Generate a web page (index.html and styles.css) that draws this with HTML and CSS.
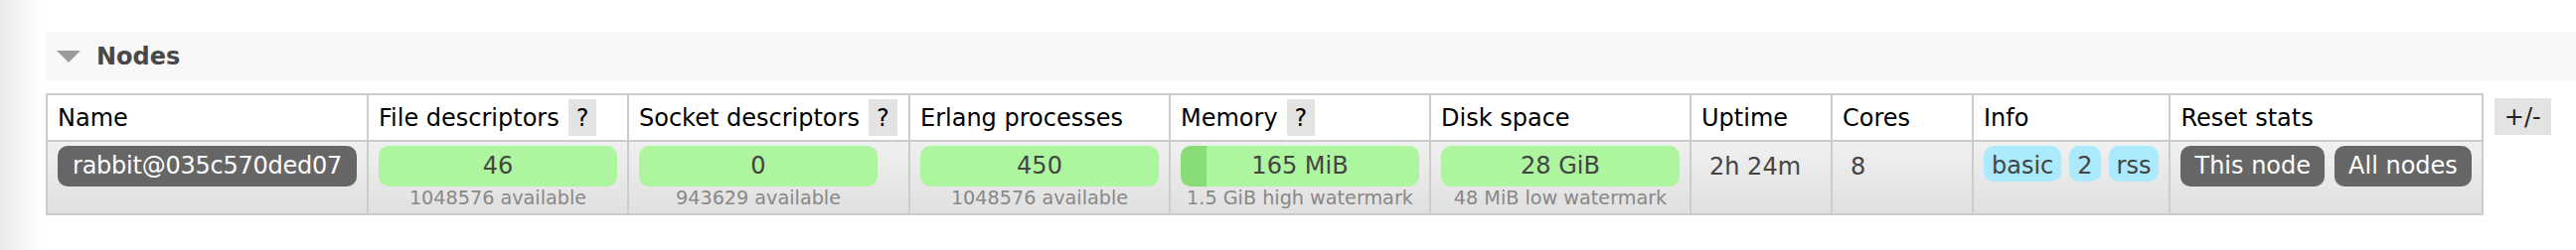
FILE: index.html
```html
<!DOCTYPE html>
<html lang="en">
<head>
    <meta charset="UTF-8">
    <meta name="viewport" content="width=device-width, initial-scale=1.0">
    <title>Nodes</title>
    <link rel="stylesheet" href="styles.css">
</head>
<body>
    <div class="page">
        <h2 class="section-title"><span class="toggle"></span>Nodes</h2>

        <div class="nodes">
            <table class="list">
                <thead>
                    <tr>
                        <th class="col-name">Name</th>
                        <th class="col-bar">File descriptors<span class="help">?</span></th>
                        <th class="col-socket">Socket descriptors<span class="help">?</span></th>
                        <th class="col-bar">Erlang processes</th>
                        <th class="col-bar">Memory<span class="help">?</span></th>
                        <th class="col-bar">Disk space</th>
                        <th class="col-small">Uptime</th>
                        <th class="col-small">Cores</th>
                        <th class="col-info">Info</th>
                        <th class="col-reset">Reset stats</th>
                    </tr>
                </thead>
                <tbody>
                    <tr>
                        <td><span class="node-name">rabbit@035c570ded07</span></td>
                        <td>
                            <div class="stat">
                                <div class="bar">46</div>
                                <span class="sub">1048576 available</span>
                            </div>
                        </td>
                        <td>
                            <div class="stat">
                                <div class="bar">0</div>
                                <span class="sub">943629 available</span>
                            </div>
                        </td>
                        <td>
                            <div class="stat">
                                <div class="bar">450</div>
                                <span class="sub">1048576 available</span>
                            </div>
                        </td>
                        <td>
                            <div class="stat">
                                <div class="bar bar-fill" style="--fill: 26px">165 MiB</div>
                                <span class="sub">1.5 GiB high watermark</span>
                            </div>
                        </td>
                        <td>
                            <div class="stat">
                                <div class="bar">28 GiB</div>
                                <span class="sub">48 MiB low watermark</span>
                            </div>
                        </td>
                        <td class="plain">2h 24m</td>
                        <td class="plain">8</td>
                        <td>
                            <div class="badges">
                                <span class="badge">basic</span>
                                <span class="badge">2</span>
                                <span class="badge">rss</span>
                            </div>
                        </td>
                        <td>
                            <div class="buttons">
                                <button class="btn">This node</button>
                                <button class="btn">All nodes</button>
                            </div>
                        </td>
                    </tr>
                </tbody>
            </table>
            <span class="columns-toggle">+/-</span>
        </div>
    </div>
</body>
</html>
```

FILE: styles.css
```css
body {
    margin: 0;
    background: linear-gradient(to right, #ebebeb, #ffffff 42px);
    font-family: "DejaVu Sans", Verdana, sans-serif;
    font-size: 24px;
    color: #444;
}

.page {
    padding: 32px 0 0 46px;
}

.section-title {
    display: flex;
    align-items: center;
    margin: 0 0 13px;
    padding: 11px 11px 10px;
    background: #f8f8f8;
    font-size: 24px;
    font-weight: bold;
    color: #484848;
}

.toggle {
    width: 0;
    height: 0;
    margin-right: 16px;
    border-left: 12px solid transparent;
    border-right: 12px solid transparent;
    border-top: 12px solid #9c9c9c;
}

.nodes {
    display: flex;
    align-items: flex-start;
    gap: 11px;
}

table.list {
    border-collapse: collapse;
    border: 2px solid #ccc;
}

.list th,
.list td {
    border: 2px solid #ccc;
    text-align: left;
    white-space: nowrap;
}

.list th {
    padding: 4px 10px;
    font-weight: normal;
    color: #000;
    background: #fff;
    vertical-align: baseline;
}

.list td {
    padding: 4px 10px;
    vertical-align: top;
    background: linear-gradient(#f0f0f0, #e0e0e0);
}

.list td.plain {
    padding: 11px 10px 4px 18px;
}

.col-name { width: 301px; }
.col-bar { width: 240px; }
.col-socket { width: 261px; }
.col-small { width: 120px; }
.col-info { width: 176px; }
.col-reset { width: 292px; }

.help {
    display: inline-block;
    margin-left: 9px;
    padding: 5px 8px 4px;
    background: #e3e3e3;
}

.node-name {
    display: block;
    width: 301px;
    height: 41px;
    line-height: 41px;
    border-radius: 10px;
    background: #666;
    color: #fff;
    text-align: center;
    letter-spacing: -0.25px;
}

.stat {
    width: 240px;
}

.bar {
    height: 41px;
    line-height: 41px;
    border-radius: 10px;
    background: #aef5a0;
    text-align: center;
}

.bar-fill {
    background: linear-gradient(to right, #88dd77 var(--fill), #aef5a0 var(--fill));
}

.sub {
    display: block;
    font-size: 0.8em;
    color: #888;
    text-align: center;
}

.badges {
    display: flex;
    gap: 8px;
}

.badge {
    padding: 6px 8px 2px;
    line-height: 28px;
    border-radius: 10px;
    background: #aaeafc;
}

.buttons {
    display: flex;
    gap: 10px;
}

.btn {
    height: 41px;
    padding: 0 14px;
    border: none;
    border-radius: 10px;
    background: #666;
    color: #fff;
    font-family: inherit;
    font-size: 24px;
    line-height: 41px;
}

.columns-toggle {
    margin-top: 5px;
    padding: 5px 10px 4px;
    background: #e3e3e3;
    color: #222;
}
```
